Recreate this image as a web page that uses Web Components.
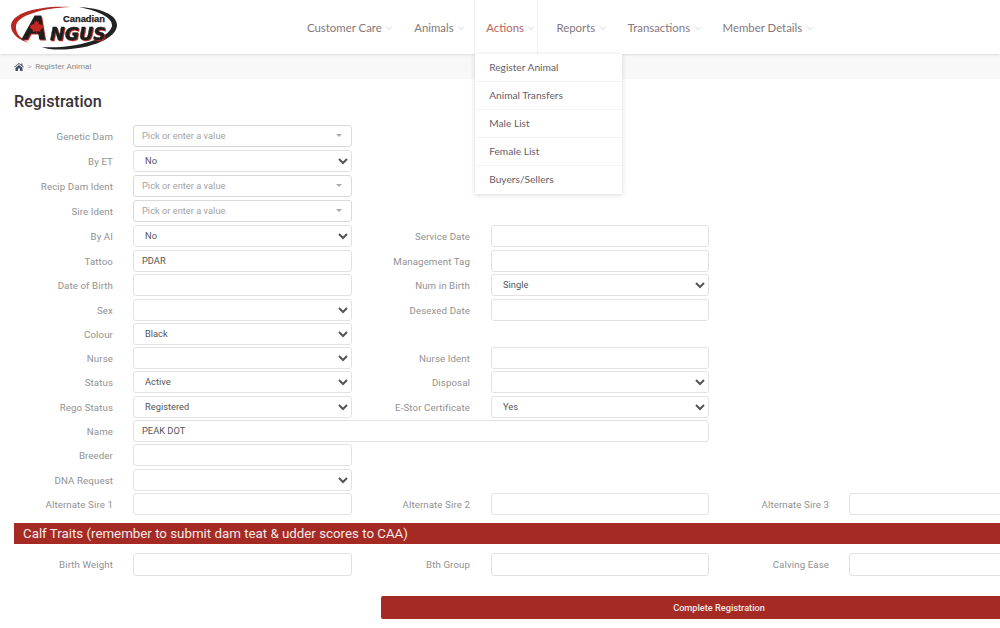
<!doctype html>
<html>
<head>
<meta charset="utf-8">
<title>Register Animal</title>
<style>
html,body{ margin:0; padding:0; background:#fff; overflow:hidden; height:100%; font-family:Roboto,"Liberation Sans",sans-serif }
</style>
</head>
<body>
<ca-header>
  <ca-logo slot="logo"></ca-logo>
  <ca-nav-item>Customer Care</ca-nav-item>
  <ca-nav-item>Animals</ca-nav-item>
  <ca-nav-item active>Actions
    <ca-menu slot="menu">
      <a>Register Animal</a>
      <a>Animal Transfers</a>
      <a>Male List</a>
      <a>Female List</a>
      <a>Buyers/Sellers</a>
    </ca-menu>
  </ca-nav-item>
  <ca-nav-item>Reports</ca-nav-item>
  <ca-nav-item>Transactions</ca-nav-item>
  <ca-nav-item>Member Details</ca-nav-item>
</ca-header>
<ca-breadcrumb>Register Animal</ca-breadcrumb>
<ca-page>
  <h2 slot="title">Registration</h2>
  <ca-row><ca-field label="Genetic Dam" type="pick"></ca-field></ca-row>
  <ca-row><ca-field label="By ET" type="select" value="No"></ca-field></ca-row>
  <ca-row><ca-field label="Recip Dam Ident" type="pick"></ca-field></ca-row>
  <ca-row><ca-field label="Sire Ident" type="pick"></ca-field></ca-row>
  <ca-row><ca-field label="By AI" type="select" value="No"></ca-field><ca-field label="Service Date"></ca-field></ca-row>
  <ca-row><ca-field label="Tattoo" value="PDAR"></ca-field><ca-field label="Management Tag"></ca-field></ca-row>
  <ca-row tight><ca-field label="Date of Birth"></ca-field><ca-field label="Num in Birth" type="select" value="Single"></ca-field></ca-row>
  <ca-row><ca-field label="Sex" type="select"></ca-field><ca-field label="Desexed Date"></ca-field></ca-row>
  <ca-row tight><ca-field label="Colour" type="select" value="Black"></ca-field></ca-row>
  <ca-row tight><ca-field label="Nurse" type="select"></ca-field><ca-field label="Nurse Ident"></ca-field></ca-row>
  <ca-row tight><ca-field label="Status" type="select" value="Active"></ca-field><ca-field label="Disposal" type="select"></ca-field></ca-row>
  <ca-row><ca-field label="Rego Status" type="select" value="Registered"></ca-field><ca-field label="E-Stor Certificate" type="select" value="Yes"></ca-field></ca-row>
  <ca-row tight><ca-field label="Name" value="PEAK DOT" wide></ca-field></ca-row>
  <ca-row tight><ca-field label="Breeder"></ca-field></ca-row>
  <ca-row><ca-field label="DNA Request" type="select"></ca-field></ca-row>
  <ca-row tight><ca-field label="Alternate Sire 1"></ca-field><ca-field label="Alternate Sire 2"></ca-field><ca-field label="Alternate Sire 3"></ca-field></ca-row>
  <ca-band>Calf Traits (remember to submit dam teat &amp; udder scores to CAA)</ca-band>
  <ca-row tall><ca-field label="Birth Weight"></ca-field><ca-field label="Bth Group"></ca-field><ca-field label="Calving Ease"></ca-field></ca-row>
  <ca-submit>Complete Registration</ca-submit>
</ca-page>

<script>
class CaHeader extends HTMLElement{
  constructor(){
    super();
    this.attachShadow({mode:"open"}).innerHTML = `
<style>
:host{ display:flex; height:54px; background:#fff; position:relative; z-index:3; box-shadow:0 1px 2px rgba(0,0,0,.12); }
.logo{ width:296px; flex:none; display:flex; align-items:center; padding-left:9px; box-sizing:border-box }
nav{ display:flex; }
</style>
<div class="logo"><slot name="logo"></slot></div>
<nav><slot></slot></nav>`;
  }
}
customElements.define("ca-header", CaHeader);

class CaLogo extends HTMLElement{
  constructor(){
    super();
    this.attachShadow({mode:"open"}).innerHTML = `
<style>:host{ display:block; width:110px; height:46px } svg{ display:block } .word{ filter:drop-shadow(1px 1px 0 #b52a22) }</style>
<svg width="110" height="46" viewBox="0 0 110 46">
  <path d="M62 3C30 1 2 9 2 22C2 30 10 36 20 39C12 35 6 29 7 22C8 12 32 4 62 3Z" fill="#b52a22"/>
  <path d="M70 3C92 4 108 11 108 21C108 34 82 46 48 45.500C40 45.500 36 44 33 43C62 45 100 36 103 22C104 14 90 7 70 3Z" fill="#222"/>
  <text x="54" y="17.500" font-family="Liberation Sans,sans-serif" font-size="9" font-weight="700" fill="#222" stroke="#222" stroke-width=".25" textLength="42" lengthAdjust="spacingAndGlyphs">Canadian</text>
  <g class="word" fill="#1e1e1e" stroke="#1e1e1e">
    <text x="14" y="35" font-family="Liberation Sans,sans-serif" font-size="33" font-weight="700" font-style="italic" stroke-width="1.200">A</text>
    <text x="41" y="35.500" font-family="DejaVu Sans,sans-serif" font-size="17.500" font-weight="700" font-style="italic" stroke-width=".4" textLength="56" lengthAdjust="spacingAndGlyphs">NGUS</text>
  </g>
  <path transform="translate(-6,-4) scale(1.100)" d="M30 18l1.200 2.300 1.600-.8-.5 3 1.700-1 .5 1.400 2-.3-.6 2 .8.500-3 2.400.4 1.300-3.300-.5V30h-.6v-1.700l-3.300.5.400-1.300-3-2.400.8-.5-.6-2 2 .3.500-1.400 1.700 1-.5-3 1.600.8z" fill="#c8281f"/>
</svg>`;
  }
}
customElements.define("ca-logo", CaLogo);

class CaNavItem extends HTMLElement{
  constructor(){
    super();
    this.attachShadow({mode:"open"}).innerHTML = `
<style>
:host{ display:flex; align-items:center; height:54px; padding:1px 11px 0 11px; position:relative; box-sizing:border-box; color:#85787c; font:400 11.400px Lato,"Open Sans",sans-serif; white-space:nowrap; gap:4.500px }
:host([active]){ color:#b9655c; padding-right:2.500px; margin-right:8.500px; box-shadow:-1px 0 0 #f1f1f1, 1px 0 0 #f1f1f1 }
svg{ display:block; margin-top:1px }
</style>
<slot></slot>
<svg width="6" height="5" viewBox="0 0 6 5"><path d="M.5 1l2.500 2.500L5.500 1" fill="none" stroke="#cfcfcf" stroke-width=".9"/></svg>
<slot name="menu"></slot>`;
  }
}
customElements.define("ca-nav-item", CaNavItem);

class CaMenu extends HTMLElement{
  constructor(){
    super();
    this.attachShadow({mode:"open"}).innerHTML = `
<style>
:host{ position:absolute; left:0; top:54px; width:147px; background:#fff; box-shadow:0 1px 5px rgba(0,0,0,.16); display:block; color:#675d68; font:400 10.200px Lato,"Open Sans",sans-serif }
::slotted(a){ display:flex; align-items:center; height:28px; box-sizing:border-box; padding:0 0 1.500px 14px; border-bottom:1px solid #f4f4f4 }
::slotted(a:last-child){ border-bottom:0 }
</style>
<slot></slot>`;
  }
}
customElements.define("ca-menu", CaMenu);

class CaBreadcrumb extends HTMLElement{
  constructor(){
    super();
    this.attachShadow({mode:"open"}).innerHTML = `
<style>
:host{ display:flex; align-items:center; gap:3.500px; height:25px; background:#f8f8f8; padding-left:14px; color:#888; font:400 8px Roboto,sans-serif }
.sep{ color:#b5b5b5 }
svg{ display:block }
</style>
<svg width="10" height="8" viewBox="0 0 10 8"><path d="M5 0L0 4l.5.6L5 1.100l4.500 3.500.5-.6L8.500 2.800V.5H7.300v1.300zM1.500 4.800V8h2.500V5.500h2V8h2.500V4.800L5 2z" fill="#445066"/></svg>
<span class="sep">&gt;</span>
<span><slot></slot></span>`;
  }
}
customElements.define("ca-breadcrumb", CaBreadcrumb);

class CaPage extends HTMLElement{
  constructor(){
    super();
    this.attachShadow({mode:"open"}).innerHTML = `
<style>
:host{ display:flex; flex-direction:column; gap:3px; width:1068px; padding:13px 0 0 0; box-sizing:border-box }
::slotted(h2){ margin:0 0 11px 14px; font:500 16.200px/19px Roboto,sans-serif; color:#3a3338 }
</style>
<slot name="title"></slot>
<slot></slot>`;
  }
}
customElements.define("ca-page", CaPage);

class CaRow extends HTMLElement{
  constructor(){
    super();
    this.attachShadow({mode:"open"}).innerHTML = `
<style>
:host{ display:grid; grid-template-columns:133px 219px 139px 218px 140px 219px; height:22px }
:host([tight]){ margin-top:-1px }
:host([tall]){ height:23px }
::slotted(ca-field:nth-child(2)){ --label-pad:21px }
</style>
<slot></slot>`;
  }
}
customElements.define("ca-row", CaRow);

class CaField extends HTMLElement{
  connectedCallback(){
    if(this.shadowRoot) return;
    const type = this.getAttribute("type") || "text";
    const value = this.getAttribute("value") || "";
    let ctl = `<input type="text" value="${value}">`;
    if(type === "select"){
      ctl = `<select><option>${value}</option></select>`;
    } else if(type === "pick"){
      ctl = `<div class="pick"><span>Pick or enter a value</span><i></i></div>`;
    }
    this.attachShadow({mode:"open"}).innerHTML = `
<style>
:host{ display:contents }
label{ align-self:center; text-align:right; padding-right:var(--label-pad,20px); font:400 9.700px Roboto,sans-serif; color:#919191; letter-spacing:.1px; white-space:nowrap }
.ctl{ min-width:0; grid-column:span 1 }
:host([wide]) .ctl{ grid-column:span 3 }
input,select,.pick{ display:block; width:100%; height:100%; box-sizing:border-box; margin:0; border:1px solid #e2e2e2; border-radius:3px; background:#fff; font:400 9.300px Roboto,sans-serif; color:#555; padding:0 8px 1px; outline:0 }
select{ padding:0 8px 1px 7px }
.pick{ display:flex; align-items:center; justify-content:space-between; color:#a3a3a3; border-color:#d9d9d9; }
.pick i{ width:0; height:0; border:3px solid transparent; border-top-color:#aaa; border-bottom:0; margin-right:1px }
</style>
<label>${this.getAttribute("label") || ""}</label>
<div class="ctl">${ctl}</div>`;
  }
}
customElements.define("ca-field", CaField);

class CaBand extends HTMLElement{
  constructor(){
    super();
    this.attachShadow({mode:"open"}).innerHTML = `
<style>
:host{ display:block; margin:5px 0 6px 14px; height:21px; background:#a52a24; color:#f4e9e8; padding-left:9px; font:400 13.300px/21px Roboto,sans-serif }
</style>
<slot></slot>`;
  }
}
customElements.define("ca-band", CaBand);

class CaSubmit extends HTMLElement{
  constructor(){
    super();
    this.attachShadow({mode:"open"}).innerHTML = `
<style>
:host{ display:block; margin:17px 11px 0 381px }
button{ display:block; width:100%; height:23px; border:0; border-radius:2px; background:#a52a24; color:#f4e9e8; font:500 9.200px Roboto,sans-serif; padding:0 }
</style>
<button type="button"><slot></slot></button>`;
  }
}
customElements.define("ca-submit", CaSubmit);
</script>
</body>
</html>
